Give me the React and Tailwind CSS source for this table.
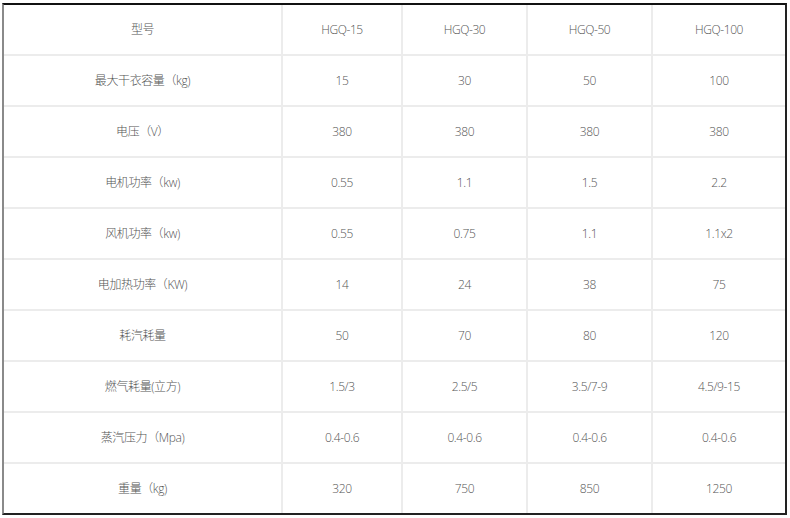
import React from "react";

const header = ["型号", "HGQ-15", "HGQ-30", "HGQ-50", "HGQ-100"];

const rows = [
  ["最大干衣容量（kg)", "15", "30", "50", "100"],
  ["电压（V）", "380", "380", "380", "380"],
  ["电机功率（kw)", "0.55", "1.1", "1.5", "2.2"],
  ["风机功率（kw)", "0.55", "0.75", "1.1", "1.1x2"],
  ["电加热功率（KW)", "14", "24", "38", "75"],
  ["耗汽耗量", "50", "70", "80", "120"],
  ["燃气耗量(立方)", "1.5/3", "2.5/5", "3.5/7-9", "4.5/9-15"],
  ["蒸汽压力（Mpa)", "0.4-0.6", "0.4-0.6", "0.4-0.6", "0.4-0.6"],
  ["重量（kg)", "320", "750", "850", "1250"],
];

export default function App() {
  const all = [header, ...rows];
  return (
    <div className="w-[790px] h-[518px] bg-white pt-[3px] pl-[2px]">
      <div
        className="w-[785px] border-t-2 border-r-2 border-b-2 border-l-2 border-t-[#111] border-r-[#222] border-b-[#222] border-l-[#8a8a8a]"
        style={{ fontFamily: '"Open Sans", "Noto Sans CJK SC", sans-serif' }}
      >
        <div className="grid grid-cols-[277px_118px_123px_123px_132px] auto-rows-[49px] gap-[2px] bg-[#ececec] text-[12px] tracking-[-0.4px] font-light text-[#555]">
          {all.flatMap((row, i) =>
            row.map((cell, j) => (
              <div key={i + "-" + j} className="bg-white flex items-center justify-center">
                {cell}
              </div>
            ))
          )}
        </div>
      </div>
    </div>
  );
}
